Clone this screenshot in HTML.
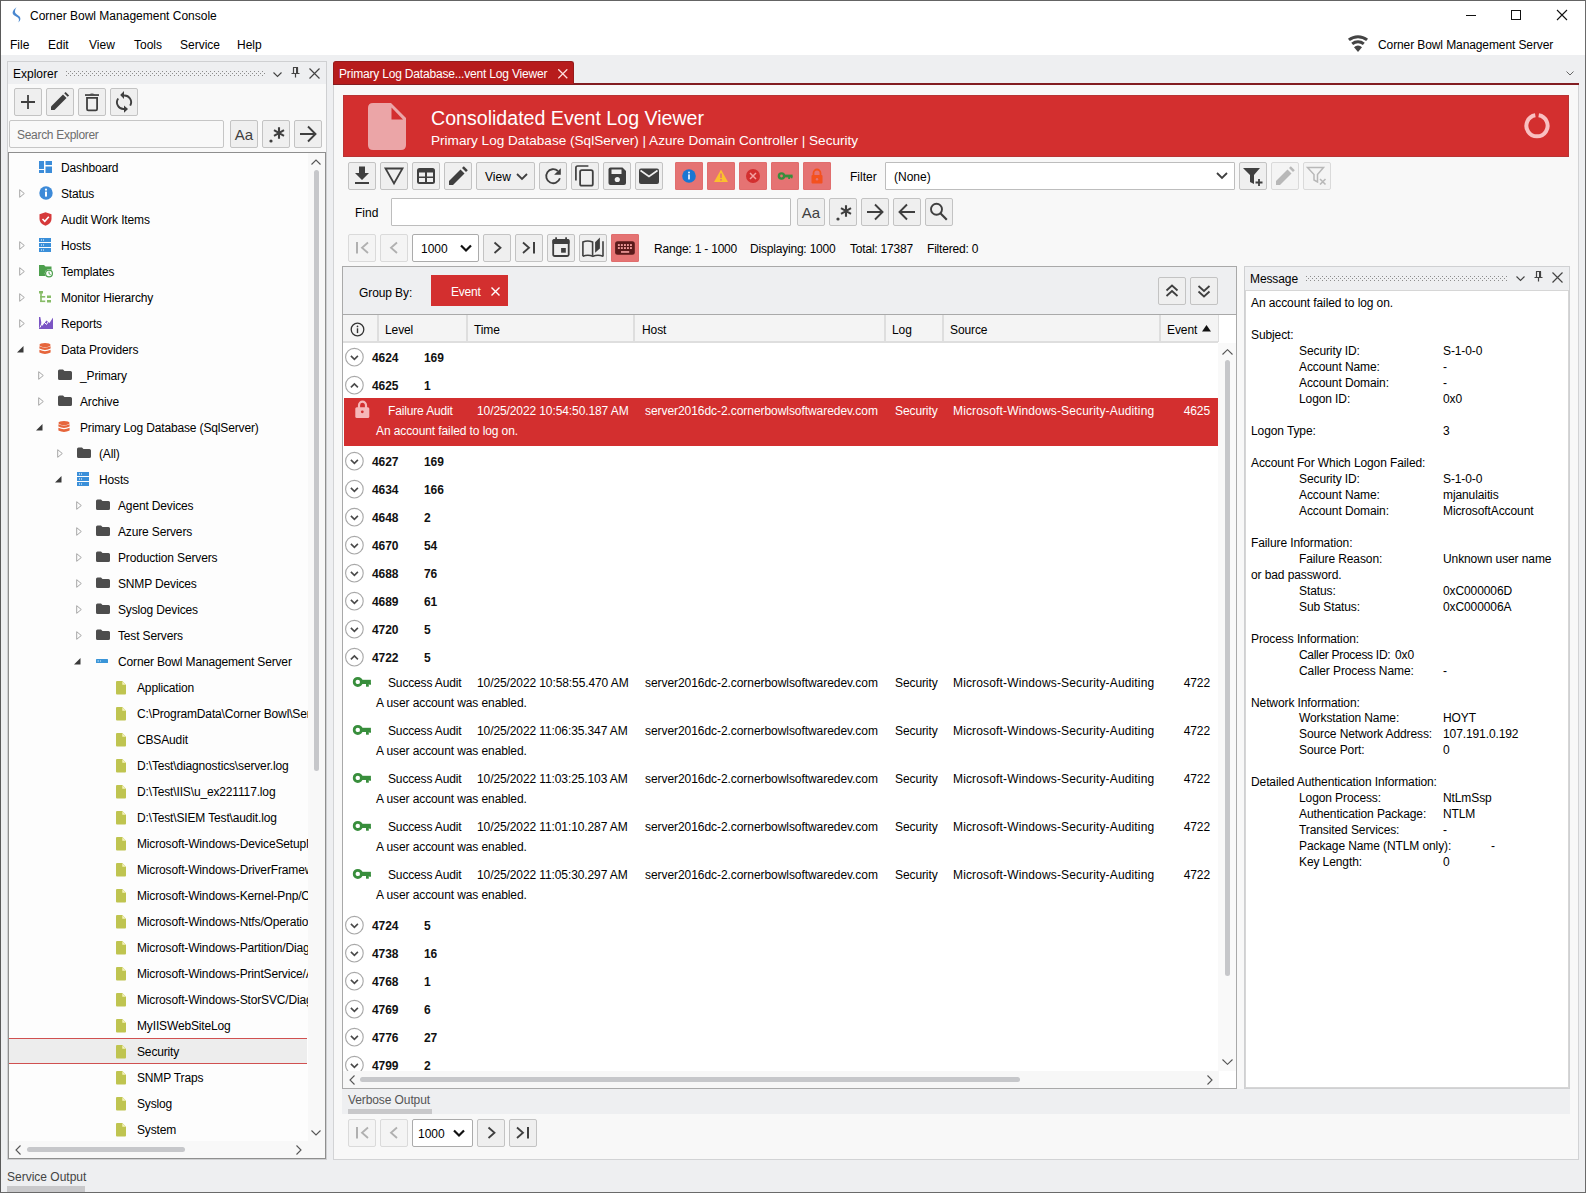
<!DOCTYPE html><html><head><meta charset="utf-8"><style>
*{margin:0;padding:0;box-sizing:border-box}
html,body{width:1586px;height:1193px;overflow:hidden;background:#eeeff1;font-family:"Liberation Sans",sans-serif;font-size:12px;color:#000000}
div,svg{position:absolute}
.t{white-space:nowrap}
</style></head><body>
<div style="left:0px;top:0px;width:1586px;height:1193px;background:#eeeff1"></div>
<div style="left:0px;top:0px;width:1586px;height:55px;background:#ffffff"></div>
<div style="left:0px;top:0px;width:1586px;height:1px;background:#646464"></div>
<div style="left:0px;top:0px;width:1px;height:1193px;background:#5a5a5a"></div>
<div style="left:1585px;top:0px;width:1px;height:1193px;background:#6a6a6a"></div>
<div style="left:0px;top:1192px;width:1586px;height:1px;background:#6a6a6a"></div>
<svg style="left:0px;top:0px;" width="30" height="30" viewBox="0 0 30 30"><path d="M16.6 7 C15 8.5 12.6 10.5 12.6 12.8 C12.6 15.2 15.8 16.2 17.8 17.4 C19.3 18.4 19.3 20.5 18.3 22.4 C20.6 20.8 21 18 19.6 16.4 C18 14.8 15.6 14 15.1 12.4 C14.7 10.9 15.4 8.6 16.6 7 Z" fill="#4a88d0"/></svg>
<div class="t" style="left:30px;top:8px;line-height:16px;font-size:12px;color:#000;">Corner Bowl Management Console</div>
<div style="left:1466px;top:15px;width:10px;height:1px;background:#111"></div>
<div style="left:1511px;top:10px;width:10px;height:10px;border:1px solid #111"></div>
<svg style="left:1556px;top:9px;" width="12" height="12" viewBox="0 0 12 12"><path d="M1 1 L11 11 M11 1 L1 11" stroke="#111" stroke-width="1.1"/></svg>
<div class="t" style="left:10px;top:37px;line-height:16px;font-size:12px;color:#000000;">File</div>
<div class="t" style="left:48px;top:37px;line-height:16px;font-size:12px;color:#000000;">Edit</div>
<div class="t" style="left:89px;top:37px;line-height:16px;font-size:12px;color:#000000;">View</div>
<div class="t" style="left:134px;top:37px;line-height:16px;font-size:12px;color:#000000;">Tools</div>
<div class="t" style="left:180px;top:37px;line-height:16px;font-size:12px;color:#000000;">Service</div>
<div class="t" style="left:237px;top:37px;line-height:16px;font-size:12px;color:#000000;">Help</div>
<svg style="left:1347px;top:33px;" width="22" height="20" viewBox="0 0 22 20"><path d="M1.9 6.9 A14.5 14.5 0 0 1 20.1 6.9" stroke="#444" stroke-width="3" fill="none"/><path d="M5.2 10.9 A9.3 9.3 0 0 1 16.8 10.9" stroke="#444" stroke-width="3" fill="none"/><path d="M11 19 L7 14.2 A5.8 5.8 0 0 1 15 14.2 Z" fill="#444"/></svg>
<div class="t" style="left:1378px;top:37px;line-height:16px;font-size:12px;color:#000000;letter-spacing:-0.1px;">Corner Bowl Management Server</div>
<div style="left:7px;top:61px;width:320px;height:1099px;background:#f9f9f9;border:1px solid #cfd0d2"></div>
<div style="left:8px;top:62px;width:318px;height:22px;background:#eeeff1"></div>
<div class="t" style="left:13px;top:66px;line-height:16px;font-size:12px;color:#000000;">Explorer</div>
<svg style="left:66px;top:71px;" width="200" height="5" viewBox="0 0 200 5"><defs><pattern id="gp66" width="4" height="4" patternUnits="userSpaceOnUse"><rect x="0" y="0" width="1" height="1" fill="#8c8c8c"/><rect x="2" y="2" width="1" height="1" fill="#8c8c8c"/></pattern></defs><rect width="200" height="5" fill="url(#gp66)"/></svg>
<svg style="left:273px;top:72px;" width="9" height="6" viewBox="0 0 9 6"><path d="M0.5 0.5 L4.5 4.5 L8.5 0.5" stroke="#444" stroke-width="1.1" fill="none"/></svg>
<svg style="left:291px;top:67px;" width="9" height="11" viewBox="0 0 9 11"><path d="M2 0.5 H7 M2.5 0.5 V6 M6.5 0.5 V6 M0.5 6.5 H8.5 M4.5 6.5 V10.5" stroke="#444" stroke-width="1.2" fill="none"/><rect x="5" y="1" width="2" height="5" fill="#444"/></svg>
<svg style="left:309px;top:68px;" width="11" height="11" viewBox="0 0 11 11"><path d="M0.5 0.5 L10.5 10.5 M10.5 0.5 L0.5 10.5" stroke="#444" stroke-width="1.2"/></svg>
<div style="left:14px;top:88px;width:28px;height:28px;background:#efefef;border:1px solid #c3c3c3;border-radius:2px"></div>
<svg style="left:14px;top:88px;" width="28" height="28" viewBox="0 0 28 28"><path d="M14 7 V21 M7 14 H21" stroke="#3f3f3f" stroke-width="1.8"/></svg>
<div style="left:46px;top:88px;width:28px;height:28px;background:#efefef;border:1px solid #c3c3c3;border-radius:2px"></div>
<svg style="left:46px;top:88px;" width="28" height="28" viewBox="0 0 28 28"><path d="M5 22 L5 18.5 L17 6.5 L20.5 10 L8.5 22 Z" fill="#3f3f3f"/><path d="M18.2 5.3 L19.6 3.9 L23.1 7.4 L21.7 8.8 Z" fill="#3f3f3f"/></svg>
<div style="left:78px;top:88px;width:28px;height:28px;background:#efefef;border:1px solid #c3c3c3;border-radius:2px"></div>
<svg style="left:78px;top:88px;" width="28" height="28" viewBox="0 0 28 28"><rect x="7" y="6.2" width="14" height="1.7" fill="#3f3f3f"/><path d="M11 6.5 Q14 4.6 17 6.5 Z" fill="#3f3f3f"/><path d="M9 9.9 H19.1 V21 Q19.1 22.3 17.8 22.3 H10.3 Q9 22.3 9 21 Z" stroke="#3f3f3f" stroke-width="1.8" fill="none"/></svg>
<div style="left:110px;top:88px;width:28px;height:28px;background:#efefef;border:1px solid #c3c3c3;border-radius:2px"></div>
<svg style="left:110px;top:88px;" width="28" height="28" viewBox="0 0 28 28"><path d="M8.2 10.5 A6.7 6.7 0 0 0 14.5 21" stroke="#3f3f3f" stroke-width="1.9" fill="none"/><path d="M14 17.4 L14 24.8 L18 21 Z" fill="#3f3f3f"/><path d="M20.2 17.6 A6.7 6.7 0 0 0 13.6 7.6" stroke="#3f3f3f" stroke-width="1.9" fill="none"/><path d="M14 3 L14 11 L10.2 7 Z" fill="#3f3f3f"/></svg>
<div style="left:9px;top:120px;width:215px;height:28px;background:#f9f9f9;border:1px solid #c6c6c6;border-radius:2px"></div>
<div class="t" style="left:17px;top:127px;line-height:16px;font-size:12px;color:#6d6d6d;letter-spacing:-0.3px;">Search Explorer</div>
<div style="left:230px;top:120px;width:28px;height:28px;background:#efefef;border:1px solid #c3c3c3;border-radius:2px"></div>
<svg style="left:230px;top:120px;" width="28" height="28" viewBox="0 0 28 28"><text x="14" y="20" text-anchor="middle" font-family="Liberation Sans" font-size="15" fill="#3f3f3f">Aa</text></svg>
<div style="left:262px;top:120px;width:28px;height:28px;background:#efefef;border:1px solid #c3c3c3;border-radius:2px"></div>
<svg style="left:262px;top:120px;" width="28" height="28" viewBox="0 0 28 28"><circle cx="9" cy="21" r="1.6" fill="#3f3f3f"/><path d="M17 7.2 V18.8 M12 10.1 L22 15.9 M22 10.1 L12 15.9" stroke="#3f3f3f" stroke-width="2.1"/></svg>
<div style="left:294px;top:120px;width:28px;height:28px;background:#efefef;border:1px solid #c3c3c3;border-radius:2px"></div>
<svg style="left:294px;top:120px;" width="28" height="28" viewBox="0 0 28 28"><path d="M6 14 H21 M14 6.5 L21.5 14 L14 21.5" stroke="#3f3f3f" stroke-width="1.9" fill="none"/></svg>
<div style="left:8px;top:152px;width:318px;height:1007px;background:#fdfdfd;border:1px solid #8f8f8f"></div>
<div style="left:308px;top:153px;width:17px;height:1005px;background:#f8f8f8"></div>
<svg style="left:311px;top:159px;" width="10" height="6" viewBox="0 0 10 6"><path d="M0.5 5.5 L5 1 L9.5 5.5" stroke="#555" stroke-width="1.1" fill="none"/></svg>
<div style="left:314px;top:170px;width:5px;height:601px;background:#c6c7ca;border-radius:3px"></div>
<svg style="left:311px;top:1130px;" width="10" height="6" viewBox="0 0 10 6"><path d="M0.5 0.5 L5 5 L9.5 0.5" stroke="#555" stroke-width="1.1" fill="none"/></svg>
<div style="left:9px;top:1141px;width:299px;height:17px;background:#f8f8f8"></div>
<svg style="left:15px;top:1145px;" width="6" height="10" viewBox="0 0 6 10"><path d="M5.5 0.5 L1 5 L5.5 9.5" stroke="#555" stroke-width="1.1" fill="none"/></svg>
<div style="left:27px;top:1147px;width:158px;height:5px;background:#c6c7ca;border-radius:3px"></div>
<svg style="left:296px;top:1145px;" width="6" height="10" viewBox="0 0 6 10"><path d="M0.5 0.5 L5 5 L0.5 9.5" stroke="#555" stroke-width="1.1" fill="none"/></svg>
<div style="left:9px;top:1038px;width:298px;height:26px;background:#ededed;border-top:1px solid #d05050;border-bottom:1px solid #d05050"></div>
<div style="left:9px;top:153px;width:299px;height:988px;overflow:hidden">
<svg style="left:30px;top:8px;" width="13" height="12" viewBox="0 0 13 12"><rect x="0" y="0" width="5" height="8" fill="#3b8cd9"/><rect x="6.5" y="0" width="6.5" height="4" fill="#3b8cd9"/><rect x="0" y="9" width="5" height="3.5" fill="#3b8cd9"/><rect x="6.5" y="5.5" width="6.5" height="7" fill="#3b8cd9"/></svg>
<div class="t" style="left:52px;top:7px;line-height:16px;font-size:12px;color:#000000;letter-spacing:-0.15px;">Dashboard</div>
<svg style="left:10px;top:36px;" width="6" height="9" viewBox="0 0 6 9"><path d="M0.7 0.7 L5.3 4.5 L0.7 8.3 Z" stroke="#a6a6a6" stroke-width="1" fill="none"/></svg>
<svg style="left:30px;top:33px;" width="14" height="14" viewBox="0 0 14 14"><circle cx="7" cy="7" r="6.7" fill="#3d8ad8"/><rect x="6" y="5.6" width="2" height="5" fill="#fff"/><circle cx="7" cy="3.7" r="1.1" fill="#fff"/></svg>
<div class="t" style="left:52px;top:33px;line-height:16px;font-size:12px;color:#000000;letter-spacing:-0.15px;">Status</div>
<svg style="left:30px;top:59px;" width="13" height="14" viewBox="0 0 13 14"><path d="M6.5 0.3 L12.5 2.2 V7 Q12.5 11.5 6.5 13.8 Q0.5 11.5 0.5 7 V2.2 Z" fill="#d6393a"/><path d="M3.5 7 L5.8 9.3 L9.8 4.8" stroke="#fff" stroke-width="1.6" fill="none"/></svg>
<div class="t" style="left:52px;top:59px;line-height:16px;font-size:12px;color:#000000;letter-spacing:-0.15px;">Audit Work Items</div>
<svg style="left:10px;top:88px;" width="6" height="9" viewBox="0 0 6 9"><path d="M0.7 0.7 L5.3 4.5 L0.7 8.3 Z" stroke="#a6a6a6" stroke-width="1" fill="none"/></svg>
<svg style="left:30px;top:85px;" width="12" height="14" viewBox="0 0 12 14"><rect x="0" y="0" width="12" height="4" fill="#3a8fd9"/><rect x="2" y="1.5" width="1" height="1" fill="#fff"/><rect x="4" y="1.5" width="1" height="1" fill="#fff"/><rect x="0" y="5" width="12" height="4" fill="#3a8fd9"/><rect x="2" y="6.5" width="1" height="1" fill="#fff"/><rect x="4" y="6.5" width="1" height="1" fill="#fff"/><rect x="0" y="10" width="12" height="4" fill="#3a8fd9"/><rect x="2" y="11.5" width="1" height="1" fill="#fff"/><rect x="4" y="11.5" width="1" height="1" fill="#fff"/></svg>
<div class="t" style="left:52px;top:85px;line-height:16px;font-size:12px;color:#000000;letter-spacing:-0.15px;">Hosts</div>
<svg style="left:10px;top:114px;" width="6" height="9" viewBox="0 0 6 9"><path d="M0.7 0.7 L5.3 4.5 L0.7 8.3 Z" stroke="#a6a6a6" stroke-width="1" fill="none"/></svg>
<svg style="left:30px;top:112px;" width="15" height="13" viewBox="0 0 15 13"><path d="M0 0 H5 L6.5 1.5 H12.5 V11 H0 Z" fill="#4d9f4d"/><circle cx="10" cy="8.5" r="4.2" fill="#fff"/><circle cx="10" cy="8.5" r="3.4" fill="none" stroke="#4d9f4d" stroke-width="1.2"/><path d="M10 6.6 V8.7 L11.6 9.6" stroke="#4d9f4d" stroke-width="1" fill="none"/></svg>
<div class="t" style="left:52px;top:111px;line-height:16px;font-size:12px;color:#000000;letter-spacing:-0.15px;">Templates</div>
<svg style="left:10px;top:140px;" width="6" height="9" viewBox="0 0 6 9"><path d="M0.7 0.7 L5.3 4.5 L0.7 8.3 Z" stroke="#a6a6a6" stroke-width="1" fill="none"/></svg>
<svg style="left:30px;top:138px;" width="12" height="12" viewBox="0 0 12 12"><rect x="0" y="0" width="4" height="2.5" fill="#86bb67"/><rect x="1.2" y="2" width="1.6" height="9" fill="#86bb67"/><rect x="1.2" y="5" width="5" height="1.6" fill="#86bb67"/><rect x="1.2" y="9.5" width="5" height="1.6" fill="#86bb67"/><rect x="8" y="4.5" width="4" height="2.5" fill="#86bb67"/><rect x="8" y="9" width="4" height="2.5" fill="#86bb67"/></svg>
<div class="t" style="left:52px;top:137px;line-height:16px;font-size:12px;color:#000000;letter-spacing:-0.15px;">Monitor Hierarchy</div>
<svg style="left:10px;top:166px;" width="6" height="9" viewBox="0 0 6 9"><path d="M0.7 0.7 L5.3 4.5 L0.7 8.3 Z" stroke="#a6a6a6" stroke-width="1" fill="none"/></svg>
<svg style="left:30px;top:164px;" width="14" height="12" viewBox="0 0 14 12"><path d="M0 0 V12 H14 V0.5 L10.5 6 L7.5 3.5 L3 9 L1.3 0 Z" fill="#7b55c4"/><path d="M1 10.5 L4 4 L7.5 7.5 L10.5 2.5 L13.5 0.5" stroke="#fff" stroke-width="1" fill="none"/></svg>
<div class="t" style="left:52px;top:163px;line-height:16px;font-size:12px;color:#000000;letter-spacing:-0.15px;">Reports</div>
<svg style="left:8px;top:193px;" width="7" height="7" viewBox="0 0 7 7"><path d="M6.5 0 L6.5 6.5 L0 6.5 Z" fill="#3a3a3a"/></svg>
<svg style="left:30px;top:190px;" width="12" height="12" viewBox="0 0 12 12"><ellipse cx="6" cy="2" rx="5.6" ry="2" fill="#e6653b"/><path d="M0.4 3.2 Q6 6 11.6 3.2 V5.6 Q6 8.4 0.4 5.6 Z" fill="#e6653b"/><path d="M0.4 6.8 Q6 9.6 11.6 6.8 V9.6 Q6 12.4 0.4 9.6 Z" fill="#e6653b"/></svg>
<div class="t" style="left:52px;top:189px;line-height:16px;font-size:12px;color:#000000;letter-spacing:-0.15px;">Data Providers</div>
<svg style="left:29px;top:218px;" width="6" height="9" viewBox="0 0 6 9"><path d="M0.7 0.7 L5.3 4.5 L0.7 8.3 Z" stroke="#a6a6a6" stroke-width="1" fill="none"/></svg>
<svg style="left:49px;top:216px;" width="14" height="12" viewBox="0 0 14 12"><path d="M0 2 Q0 0.5 1.5 0.5 H5 L6.5 2 H12.5 Q14 2 14 3.5 V9.5 Q14 11 12.5 11 H1.5 Q0 11 0 9.5 Z" fill="#4d4d4d"/></svg>
<div class="t" style="left:71px;top:215px;line-height:16px;font-size:12px;color:#000000;letter-spacing:-0.15px;">_Primary</div>
<svg style="left:29px;top:244px;" width="6" height="9" viewBox="0 0 6 9"><path d="M0.7 0.7 L5.3 4.5 L0.7 8.3 Z" stroke="#a6a6a6" stroke-width="1" fill="none"/></svg>
<svg style="left:49px;top:242px;" width="14" height="12" viewBox="0 0 14 12"><path d="M0 2 Q0 0.5 1.5 0.5 H5 L6.5 2 H12.5 Q14 2 14 3.5 V9.5 Q14 11 12.5 11 H1.5 Q0 11 0 9.5 Z" fill="#4d4d4d"/></svg>
<div class="t" style="left:71px;top:241px;line-height:16px;font-size:12px;color:#000000;letter-spacing:-0.15px;">Archive</div>
<svg style="left:27px;top:271px;" width="7" height="7" viewBox="0 0 7 7"><path d="M6.5 0 L6.5 6.5 L0 6.5 Z" fill="#3a3a3a"/></svg>
<svg style="left:49px;top:268px;" width="12" height="12" viewBox="0 0 12 12"><ellipse cx="6" cy="2" rx="5.6" ry="2" fill="#e6653b"/><path d="M0.4 3.2 Q6 6 11.6 3.2 V5.6 Q6 8.4 0.4 5.6 Z" fill="#e6653b"/><path d="M0.4 6.8 Q6 9.6 11.6 6.8 V9.6 Q6 12.4 0.4 9.6 Z" fill="#e6653b"/></svg>
<div class="t" style="left:71px;top:267px;line-height:16px;font-size:12px;color:#000000;letter-spacing:-0.15px;">Primary Log Database (SqlServer)</div>
<svg style="left:48px;top:296px;" width="6" height="9" viewBox="0 0 6 9"><path d="M0.7 0.7 L5.3 4.5 L0.7 8.3 Z" stroke="#a6a6a6" stroke-width="1" fill="none"/></svg>
<svg style="left:68px;top:294px;" width="14" height="12" viewBox="0 0 14 12"><path d="M0 2 Q0 0.5 1.5 0.5 H5 L6.5 2 H12.5 Q14 2 14 3.5 V9.5 Q14 11 12.5 11 H1.5 Q0 11 0 9.5 Z" fill="#4d4d4d"/></svg>
<div class="t" style="left:90px;top:293px;line-height:16px;font-size:12px;color:#000000;letter-spacing:-0.15px;">(All)</div>
<svg style="left:46px;top:323px;" width="7" height="7" viewBox="0 0 7 7"><path d="M6.5 0 L6.5 6.5 L0 6.5 Z" fill="#3a3a3a"/></svg>
<svg style="left:68px;top:319px;" width="12" height="14" viewBox="0 0 12 14"><rect x="0" y="0" width="12" height="4" fill="#3a8fd9"/><rect x="2" y="1.5" width="1" height="1" fill="#fff"/><rect x="4" y="1.5" width="1" height="1" fill="#fff"/><rect x="0" y="5" width="12" height="4" fill="#3a8fd9"/><rect x="2" y="6.5" width="1" height="1" fill="#fff"/><rect x="4" y="6.5" width="1" height="1" fill="#fff"/><rect x="0" y="10" width="12" height="4" fill="#3a8fd9"/><rect x="2" y="11.5" width="1" height="1" fill="#fff"/><rect x="4" y="11.5" width="1" height="1" fill="#fff"/></svg>
<div class="t" style="left:90px;top:319px;line-height:16px;font-size:12px;color:#000000;letter-spacing:-0.15px;">Hosts</div>
<svg style="left:67px;top:348px;" width="6" height="9" viewBox="0 0 6 9"><path d="M0.7 0.7 L5.3 4.5 L0.7 8.3 Z" stroke="#a6a6a6" stroke-width="1" fill="none"/></svg>
<svg style="left:87px;top:346px;" width="14" height="12" viewBox="0 0 14 12"><path d="M0 2 Q0 0.5 1.5 0.5 H5 L6.5 2 H12.5 Q14 2 14 3.5 V9.5 Q14 11 12.5 11 H1.5 Q0 11 0 9.5 Z" fill="#4d4d4d"/></svg>
<div class="t" style="left:109px;top:345px;line-height:16px;font-size:12px;color:#000000;letter-spacing:-0.15px;">Agent Devices</div>
<svg style="left:67px;top:374px;" width="6" height="9" viewBox="0 0 6 9"><path d="M0.7 0.7 L5.3 4.5 L0.7 8.3 Z" stroke="#a6a6a6" stroke-width="1" fill="none"/></svg>
<svg style="left:87px;top:372px;" width="14" height="12" viewBox="0 0 14 12"><path d="M0 2 Q0 0.5 1.5 0.5 H5 L6.5 2 H12.5 Q14 2 14 3.5 V9.5 Q14 11 12.5 11 H1.5 Q0 11 0 9.5 Z" fill="#4d4d4d"/></svg>
<div class="t" style="left:109px;top:371px;line-height:16px;font-size:12px;color:#000000;letter-spacing:-0.15px;">Azure Servers</div>
<svg style="left:67px;top:400px;" width="6" height="9" viewBox="0 0 6 9"><path d="M0.7 0.7 L5.3 4.5 L0.7 8.3 Z" stroke="#a6a6a6" stroke-width="1" fill="none"/></svg>
<svg style="left:87px;top:398px;" width="14" height="12" viewBox="0 0 14 12"><path d="M0 2 Q0 0.5 1.5 0.5 H5 L6.5 2 H12.5 Q14 2 14 3.5 V9.5 Q14 11 12.5 11 H1.5 Q0 11 0 9.5 Z" fill="#4d4d4d"/></svg>
<div class="t" style="left:109px;top:397px;line-height:16px;font-size:12px;color:#000000;letter-spacing:-0.15px;">Production Servers</div>
<svg style="left:67px;top:426px;" width="6" height="9" viewBox="0 0 6 9"><path d="M0.7 0.7 L5.3 4.5 L0.7 8.3 Z" stroke="#a6a6a6" stroke-width="1" fill="none"/></svg>
<svg style="left:87px;top:424px;" width="14" height="12" viewBox="0 0 14 12"><path d="M0 2 Q0 0.5 1.5 0.5 H5 L6.5 2 H12.5 Q14 2 14 3.5 V9.5 Q14 11 12.5 11 H1.5 Q0 11 0 9.5 Z" fill="#4d4d4d"/></svg>
<div class="t" style="left:109px;top:423px;line-height:16px;font-size:12px;color:#000000;letter-spacing:-0.15px;">SNMP Devices</div>
<svg style="left:67px;top:452px;" width="6" height="9" viewBox="0 0 6 9"><path d="M0.7 0.7 L5.3 4.5 L0.7 8.3 Z" stroke="#a6a6a6" stroke-width="1" fill="none"/></svg>
<svg style="left:87px;top:450px;" width="14" height="12" viewBox="0 0 14 12"><path d="M0 2 Q0 0.5 1.5 0.5 H5 L6.5 2 H12.5 Q14 2 14 3.5 V9.5 Q14 11 12.5 11 H1.5 Q0 11 0 9.5 Z" fill="#4d4d4d"/></svg>
<div class="t" style="left:109px;top:449px;line-height:16px;font-size:12px;color:#000000;letter-spacing:-0.15px;">Syslog Devices</div>
<svg style="left:67px;top:478px;" width="6" height="9" viewBox="0 0 6 9"><path d="M0.7 0.7 L5.3 4.5 L0.7 8.3 Z" stroke="#a6a6a6" stroke-width="1" fill="none"/></svg>
<svg style="left:87px;top:476px;" width="14" height="12" viewBox="0 0 14 12"><path d="M0 2 Q0 0.5 1.5 0.5 H5 L6.5 2 H12.5 Q14 2 14 3.5 V9.5 Q14 11 12.5 11 H1.5 Q0 11 0 9.5 Z" fill="#4d4d4d"/></svg>
<div class="t" style="left:109px;top:475px;line-height:16px;font-size:12px;color:#000000;letter-spacing:-0.15px;">Test Servers</div>
<svg style="left:65px;top:505px;" width="7" height="7" viewBox="0 0 7 7"><path d="M6.5 0 L6.5 6.5 L0 6.5 Z" fill="#3a3a3a"/></svg>
<svg style="left:87px;top:506px;" width="12" height="5" viewBox="0 0 12 5"><rect x="0" y="0" width="12" height="4" rx="0.5" fill="#3a95d8"/><rect x="1.5" y="1.3" width="1.4" height="1.4" fill="#a8d4f4"/><rect x="4" y="1.3" width="1" height="1.4" fill="#a8d4f4"/></svg>
<div class="t" style="left:109px;top:501px;line-height:16px;font-size:12px;color:#000000;letter-spacing:-0.15px;">Corner Bowl Management Server</div>
<svg style="left:107px;top:528px;" width="10" height="14" viewBox="0 0 10 14"><path d="M0 1 Q0 0 1 0 H6.3 L10 3.7 V12.5 Q10 13.5 9 13.5 H1 Q0 13.5 0 12.5 Z" fill="#bfc450"/><path d="M6.3 0.3 V3.7 H9.7 Z" fill="#fffbd0" opacity="0.85"/></svg>
<div class="t" style="left:128px;top:527px;line-height:16px;font-size:12px;color:#000000;letter-spacing:-0.15px;">Application</div>
<svg style="left:107px;top:554px;" width="10" height="14" viewBox="0 0 10 14"><path d="M0 1 Q0 0 1 0 H6.3 L10 3.7 V12.5 Q10 13.5 9 13.5 H1 Q0 13.5 0 12.5 Z" fill="#bfc450"/><path d="M6.3 0.3 V3.7 H9.7 Z" fill="#fffbd0" opacity="0.85"/></svg>
<div class="t" style="left:128px;top:553px;line-height:16px;font-size:12px;color:#000000;letter-spacing:-0.15px;">C:\ProgramData\Corner Bowl\Server\Logs</div>
<svg style="left:107px;top:580px;" width="10" height="14" viewBox="0 0 10 14"><path d="M0 1 Q0 0 1 0 H6.3 L10 3.7 V12.5 Q10 13.5 9 13.5 H1 Q0 13.5 0 12.5 Z" fill="#bfc450"/><path d="M6.3 0.3 V3.7 H9.7 Z" fill="#fffbd0" opacity="0.85"/></svg>
<div class="t" style="left:128px;top:579px;line-height:16px;font-size:12px;color:#000000;letter-spacing:-0.15px;">CBSAudit</div>
<svg style="left:107px;top:606px;" width="10" height="14" viewBox="0 0 10 14"><path d="M0 1 Q0 0 1 0 H6.3 L10 3.7 V12.5 Q10 13.5 9 13.5 H1 Q0 13.5 0 12.5 Z" fill="#bfc450"/><path d="M6.3 0.3 V3.7 H9.7 Z" fill="#fffbd0" opacity="0.85"/></svg>
<div class="t" style="left:128px;top:605px;line-height:16px;font-size:12px;color:#000000;letter-spacing:-0.15px;">D:\Test\diagnostics\server.log</div>
<svg style="left:107px;top:632px;" width="10" height="14" viewBox="0 0 10 14"><path d="M0 1 Q0 0 1 0 H6.3 L10 3.7 V12.5 Q10 13.5 9 13.5 H1 Q0 13.5 0 12.5 Z" fill="#bfc450"/><path d="M6.3 0.3 V3.7 H9.7 Z" fill="#fffbd0" opacity="0.85"/></svg>
<div class="t" style="left:128px;top:631px;line-height:16px;font-size:12px;color:#000000;letter-spacing:-0.15px;">D:\Test\IIS\u_ex221117.log</div>
<svg style="left:107px;top:658px;" width="10" height="14" viewBox="0 0 10 14"><path d="M0 1 Q0 0 1 0 H6.3 L10 3.7 V12.5 Q10 13.5 9 13.5 H1 Q0 13.5 0 12.5 Z" fill="#bfc450"/><path d="M6.3 0.3 V3.7 H9.7 Z" fill="#fffbd0" opacity="0.85"/></svg>
<div class="t" style="left:128px;top:657px;line-height:16px;font-size:12px;color:#000000;letter-spacing:-0.15px;">D:\Test\SIEM Test\audit.log</div>
<svg style="left:107px;top:684px;" width="10" height="14" viewBox="0 0 10 14"><path d="M0 1 Q0 0 1 0 H6.3 L10 3.7 V12.5 Q10 13.5 9 13.5 H1 Q0 13.5 0 12.5 Z" fill="#bfc450"/><path d="M6.3 0.3 V3.7 H9.7 Z" fill="#fffbd0" opacity="0.85"/></svg>
<div class="t" style="left:128px;top:683px;line-height:16px;font-size:12px;color:#000000;letter-spacing:-0.15px;">Microsoft-Windows-DeviceSetupManager/Admin</div>
<svg style="left:107px;top:710px;" width="10" height="14" viewBox="0 0 10 14"><path d="M0 1 Q0 0 1 0 H6.3 L10 3.7 V12.5 Q10 13.5 9 13.5 H1 Q0 13.5 0 12.5 Z" fill="#bfc450"/><path d="M6.3 0.3 V3.7 H9.7 Z" fill="#fffbd0" opacity="0.85"/></svg>
<div class="t" style="left:128px;top:709px;line-height:16px;font-size:12px;color:#000000;letter-spacing:-0.15px;">Microsoft-Windows-DriverFrameworks-UserMode/Operational</div>
<svg style="left:107px;top:736px;" width="10" height="14" viewBox="0 0 10 14"><path d="M0 1 Q0 0 1 0 H6.3 L10 3.7 V12.5 Q10 13.5 9 13.5 H1 Q0 13.5 0 12.5 Z" fill="#bfc450"/><path d="M6.3 0.3 V3.7 H9.7 Z" fill="#fffbd0" opacity="0.85"/></svg>
<div class="t" style="left:128px;top:735px;line-height:16px;font-size:12px;color:#000000;letter-spacing:-0.15px;">Microsoft-Windows-Kernel-Pnp/Configuration</div>
<svg style="left:107px;top:762px;" width="10" height="14" viewBox="0 0 10 14"><path d="M0 1 Q0 0 1 0 H6.3 L10 3.7 V12.5 Q10 13.5 9 13.5 H1 Q0 13.5 0 12.5 Z" fill="#bfc450"/><path d="M6.3 0.3 V3.7 H9.7 Z" fill="#fffbd0" opacity="0.85"/></svg>
<div class="t" style="left:128px;top:761px;line-height:16px;font-size:12px;color:#000000;letter-spacing:-0.15px;">Microsoft-Windows-Ntfs/Operational</div>
<svg style="left:107px;top:788px;" width="10" height="14" viewBox="0 0 10 14"><path d="M0 1 Q0 0 1 0 H6.3 L10 3.7 V12.5 Q10 13.5 9 13.5 H1 Q0 13.5 0 12.5 Z" fill="#bfc450"/><path d="M6.3 0.3 V3.7 H9.7 Z" fill="#fffbd0" opacity="0.85"/></svg>
<div class="t" style="left:128px;top:787px;line-height:16px;font-size:12px;color:#000000;letter-spacing:-0.15px;">Microsoft-Windows-Partition/Diagnostic</div>
<svg style="left:107px;top:814px;" width="10" height="14" viewBox="0 0 10 14"><path d="M0 1 Q0 0 1 0 H6.3 L10 3.7 V12.5 Q10 13.5 9 13.5 H1 Q0 13.5 0 12.5 Z" fill="#bfc450"/><path d="M6.3 0.3 V3.7 H9.7 Z" fill="#fffbd0" opacity="0.85"/></svg>
<div class="t" style="left:128px;top:813px;line-height:16px;font-size:12px;color:#000000;letter-spacing:-0.15px;">Microsoft-Windows-PrintService/Admin</div>
<svg style="left:107px;top:840px;" width="10" height="14" viewBox="0 0 10 14"><path d="M0 1 Q0 0 1 0 H6.3 L10 3.7 V12.5 Q10 13.5 9 13.5 H1 Q0 13.5 0 12.5 Z" fill="#bfc450"/><path d="M6.3 0.3 V3.7 H9.7 Z" fill="#fffbd0" opacity="0.85"/></svg>
<div class="t" style="left:128px;top:839px;line-height:16px;font-size:12px;color:#000000;letter-spacing:-0.15px;">Microsoft-Windows-StorSVC/Diagnostic</div>
<svg style="left:107px;top:866px;" width="10" height="14" viewBox="0 0 10 14"><path d="M0 1 Q0 0 1 0 H6.3 L10 3.7 V12.5 Q10 13.5 9 13.5 H1 Q0 13.5 0 12.5 Z" fill="#bfc450"/><path d="M6.3 0.3 V3.7 H9.7 Z" fill="#fffbd0" opacity="0.85"/></svg>
<div class="t" style="left:128px;top:865px;line-height:16px;font-size:12px;color:#000000;letter-spacing:-0.15px;">MyIISWebSiteLog</div>
<svg style="left:107px;top:892px;" width="10" height="14" viewBox="0 0 10 14"><path d="M0 1 Q0 0 1 0 H6.3 L10 3.7 V12.5 Q10 13.5 9 13.5 H1 Q0 13.5 0 12.5 Z" fill="#bfc450"/><path d="M6.3 0.3 V3.7 H9.7 Z" fill="#fffbd0" opacity="0.85"/></svg>
<div class="t" style="left:128px;top:891px;line-height:16px;font-size:12px;color:#000000;letter-spacing:-0.15px;">Security</div>
<svg style="left:107px;top:918px;" width="10" height="14" viewBox="0 0 10 14"><path d="M0 1 Q0 0 1 0 H6.3 L10 3.7 V12.5 Q10 13.5 9 13.5 H1 Q0 13.5 0 12.5 Z" fill="#bfc450"/><path d="M6.3 0.3 V3.7 H9.7 Z" fill="#fffbd0" opacity="0.85"/></svg>
<div class="t" style="left:128px;top:917px;line-height:16px;font-size:12px;color:#000000;letter-spacing:-0.15px;">SNMP Traps</div>
<svg style="left:107px;top:944px;" width="10" height="14" viewBox="0 0 10 14"><path d="M0 1 Q0 0 1 0 H6.3 L10 3.7 V12.5 Q10 13.5 9 13.5 H1 Q0 13.5 0 12.5 Z" fill="#bfc450"/><path d="M6.3 0.3 V3.7 H9.7 Z" fill="#fffbd0" opacity="0.85"/></svg>
<div class="t" style="left:128px;top:943px;line-height:16px;font-size:12px;color:#000000;letter-spacing:-0.15px;">Syslog</div>
<svg style="left:107px;top:970px;" width="10" height="14" viewBox="0 0 10 14"><path d="M0 1 Q0 0 1 0 H6.3 L10 3.7 V12.5 Q10 13.5 9 13.5 H1 Q0 13.5 0 12.5 Z" fill="#bfc450"/><path d="M6.3 0.3 V3.7 H9.7 Z" fill="#fffbd0" opacity="0.85"/></svg>
<div class="t" style="left:128px;top:969px;line-height:16px;font-size:12px;color:#000000;letter-spacing:-0.15px;">System</div>
</div>
<div class="t" style="left:7px;top:1169px;line-height:16px;font-size:12px;color:#444;">Service Output</div>
<div style="left:7px;top:1186px;width:78px;height:6px;background:#c8c8ca"></div>
<div style="left:333px;top:84px;width:1246px;height:1076px;background:#f8f8f8;border:1px solid #d2d3d5;border-top:none"></div>
<div style="left:333px;top:83px;width:1246px;height:2px;background:#821d21"></div>
<div style="left:333px;top:61px;width:241px;height:23px;background:#b71c1c;border:1px solid #961b1b;border-bottom:none;border-radius:3px 3px 0 0"></div>
<div class="t" style="left:339px;top:66px;line-height:16px;font-size:12px;color:#ffffff;letter-spacing:-0.18px;">Primary Log Database...vent Log Viewer</div>
<svg style="left:558px;top:69px;" width="10" height="10" viewBox="0 0 10 10"><path d="M0.3 0.3 L9.3 9.3 M9.3 0.3 L0.3 9.3" stroke="#ffe0e0" stroke-width="1.3"/></svg>
<svg style="left:1566px;top:71px;" width="8" height="5" viewBox="0 0 8 5"><path d="M0.5 0.5 L4 4 L7.5 0.5" stroke="#666" stroke-width="1" fill="none"/></svg>
<div style="left:343px;top:95px;width:1226px;height:62px;background:#d32f2f;border:1px solid #b83434"></div>
<svg style="left:368px;top:103px;" width="38" height="47" viewBox="0 0 38 47"><path d="M5 0 H23 L38 15 V42 Q38 47 33 47 H5 Q0 47 0 42 V5 Q0 0 5 0 Z" fill="#eba5a7"/><path d="M23.5 4.5 V16.5 H35 Z" fill="#d32f2f"/></svg>
<div class="t" style="left:431px;top:106px;line-height:24px;font-size:19.6px;color:#ffffff;">Consolidated Event Log Viewer</div>
<div class="t" style="left:431px;top:132px;line-height:18px;font-size:13.6px;color:#ffffff;">Primary Log Database (SqlServer) | Azure Domain Controller | Security</div>
<svg style="left:1524px;top:113px;" width="26" height="26" viewBox="0 0 26 26"><path d="M11.3 2.3 A10.6 10.6 0 1 0 14.7 2.3" stroke="#f9c0c1" stroke-width="4" fill="none"/></svg>
<div style="left:348px;top:162px;width:28px;height:28px;background:#efefef;border:1px solid #c3c3c3;border-radius:2px"></div>
<svg style="left:348px;top:162px;" width="28" height="28" viewBox="0 0 28 28"><path d="M11 4.5 H17 V11 H21 L14 18 L7 11 H11 Z" fill="#3f3f3f"/><rect x="7" y="20" width="14" height="2" fill="#3f3f3f"/></svg>
<div style="left:380px;top:162px;width:28px;height:28px;background:#efefef;border:1px solid #c3c3c3;border-radius:2px"></div>
<svg style="left:380px;top:162px;" width="28" height="28" viewBox="0 0 28 28"><path d="M5.5 6.5 H22.5 L14 21.5 Z" stroke="#3f3f3f" stroke-width="1.8" fill="none" stroke-linejoin="miter"/></svg>
<div style="left:412px;top:162px;width:28px;height:28px;background:#efefef;border:1px solid #c3c3c3;border-radius:2px"></div>
<svg style="left:412px;top:162px;" width="28" height="28" viewBox="0 0 28 28"><rect x="5" y="6" width="18" height="16" rx="2.5" fill="#3f3f3f"/><rect x="7" y="10.5" width="6" height="4" fill="#efefef"/><rect x="15" y="10.5" width="6" height="4" fill="#efefef"/><rect x="7" y="16" width="6" height="4" fill="#efefef"/><rect x="15" y="16" width="6" height="4" fill="#efefef"/></svg>
<div style="left:444px;top:162px;width:28px;height:28px;background:#efefef;border:1px solid #c3c3c3;border-radius:2px"></div>
<svg style="left:444px;top:162px;" width="28" height="28" viewBox="0 0 28 28"><path d="M5 23 L5 19 L16.5 7.5 L20.5 11.5 L9 23 Z" fill="#3f3f3f"/><path d="M18 6 L19.8 4.2 L23.8 8.2 L22 10 Z" fill="#3f3f3f"/></svg>
<div style="left:476px;top:162px;width:59px;height:28px;background:#efefef;border:1px solid #c3c3c3;border-radius:2px"></div>
<div class="t" style="left:485px;top:169px;line-height:16px;font-size:12px;color:#000000;">View</div>
<svg style="left:516px;top:173px;" width="12" height="8" viewBox="0 0 12 8"><path d="M1 1 L6 6 L11 1" stroke="#3f3f3f" stroke-width="1.8" fill="none"/></svg>
<div style="left:539px;top:162px;width:28px;height:28px;background:#efefef;border:1px solid #c3c3c3;border-radius:2px"></div>
<svg style="left:539px;top:162px;" width="28" height="28" viewBox="0 0 28 28"><path d="M20.9 16.3 A7 7 0 1 1 18.9 9" stroke="#3f3f3f" stroke-width="1.8" fill="none"/><path d="M15.1 12.7 L21.8 12.7 L21.8 6.3 Z" fill="#3f3f3f"/></svg>
<div style="left:571px;top:162px;width:28px;height:28px;background:#efefef;border:1px solid #c3c3c3;border-radius:2px"></div>
<svg style="left:571px;top:162px;" width="28" height="28" viewBox="0 0 28 28"><path d="M4.9 18.6 V5.8 Q4.9 4 6.7 4 H17.4" stroke="#3f3f3f" stroke-width="1.7" fill="none"/><rect x="9.1" y="8.2" width="12.7" height="15.5" rx="1.8" stroke="#3f3f3f" stroke-width="1.8" fill="none"/></svg>
<div style="left:603px;top:162px;width:28px;height:28px;background:#efefef;border:1px solid #c3c3c3;border-radius:2px"></div>
<svg style="left:603px;top:162px;" width="28" height="28" viewBox="0 0 28 28"><path d="M5.5 7.5 Q5.5 5.5 7.5 5.5 H19.5 L23 9 V21 Q23 23 21 23 H7.5 Q5.5 23 5.5 21 Z" fill="#3f3f3f"/><rect x="8.5" y="7.5" width="10" height="4.5" fill="#efefef"/><circle cx="14.3" cy="17.5" r="2.6" fill="#efefef"/></svg>
<div style="left:635px;top:162px;width:28px;height:28px;background:#efefef;border:1px solid #c3c3c3;border-radius:2px"></div>
<svg style="left:635px;top:162px;" width="28" height="28" viewBox="0 0 28 28"><rect x="4" y="6.5" width="20" height="15.5" rx="2" fill="#3f3f3f"/><path d="M5.5 8.5 L14 14.5 L22.5 8.5" stroke="#efefef" stroke-width="1.6" fill="none"/></svg>
<div style="left:675px;top:162px;width:28px;height:28px;background:#e57373;border:1px solid #e06e6e;border-radius:1px"></div>
<svg style="left:675px;top:162px;" width="28" height="28" viewBox="0 0 28 28"><circle cx="14" cy="14" r="6.8" fill="#1976d2"/><rect x="13.1" y="12.4" width="1.8" height="5" fill="#e3f0ff"/><circle cx="14" cy="10.6" r="1" fill="#e3f0ff"/></svg>
<div style="left:707px;top:162px;width:28px;height:28px;background:#e57373;border:1px solid #e06e6e;border-radius:1px"></div>
<svg style="left:707px;top:162px;" width="28" height="28" viewBox="0 0 28 28"><path d="M14 7.5 L21 20 H7 Z" fill="#fbc02d"/><rect x="13.2" y="11.5" width="1.6" height="4.5" fill="#e57373"/><rect x="13.2" y="17" width="1.6" height="1.6" fill="#e57373"/></svg>
<div style="left:739px;top:162px;width:28px;height:28px;background:#e57373;border:1px solid #e06e6e;border-radius:1px"></div>
<svg style="left:739px;top:162px;" width="28" height="28" viewBox="0 0 28 28"><circle cx="14" cy="14" r="7" fill="#d32f2f"/><path d="M11 11 L17 17 M17 11 L11 17" stroke="#f4a0a0" stroke-width="1.5"/></svg>
<div style="left:771px;top:162px;width:28px;height:28px;background:#e57373;border:1px solid #e06e6e;border-radius:1px"></div>
<svg style="left:771px;top:162px;" width="28" height="28" viewBox="0 0 28 28"><circle cx="10.5" cy="14" r="3.8" fill="#388e3c"/><circle cx="10.5" cy="14" r="1.4" fill="#e57373"/><rect x="13" y="12.6" width="8.6" height="2.8" fill="#388e3c"/><rect x="17.2" y="14" width="1.8" height="3" fill="#388e3c"/><rect x="19.6" y="14" width="1.8" height="2.3" fill="#388e3c"/></svg>
<div style="left:803px;top:162px;width:28px;height:28px;background:#e57373;border:1px solid #e06e6e;border-radius:1px"></div>
<svg style="left:803px;top:162px;" width="28" height="28" viewBox="0 0 28 28"><path d="M10.5 13 V11 A3.5 3.5 0 0 1 17.5 11 V13" stroke="#f4511e" stroke-width="1.8" fill="none"/><rect x="8.5" y="13" width="11" height="8.5" rx="1" fill="#f4511e"/><circle cx="14" cy="17.2" r="1.2" fill="#e57373"/></svg>
<div class="t" style="left:850px;top:169px;line-height:16px;font-size:12px;color:#000000;">Filter</div>
<div style="left:885px;top:162px;width:350px;height:28px;background:#ffffff;border:1px solid #bdbdbd;border-radius:1px"></div>
<div class="t" style="left:894px;top:169px;line-height:16px;font-size:12px;color:#000000;">(None)</div>
<svg style="left:1216px;top:172px;" width="12" height="8" viewBox="0 0 12 8"><path d="M1 1 L6 6 L11 1" stroke="#3f3f3f" stroke-width="1.8" fill="none"/></svg>
<div style="left:1239px;top:162px;width:28px;height:28px;background:#efefef;border:1px solid #c3c3c3;border-radius:2px"></div>
<svg style="left:1239px;top:162px;" width="28" height="28" viewBox="0 0 28 28"><path d="M4 6 H21 L15 13 V22 L11 20 V13 Z" fill="#3f3f3f"/><path d="M20 17 V24 M16.5 20.5 H23.5" stroke="#3f3f3f" stroke-width="1.8"/></svg>
<div style="left:1271px;top:162px;width:28px;height:28px;background:#f4f4f4;border:1px solid #dadada;border-radius:2px"></div>
<svg style="left:1271px;top:162px;" width="28" height="28" viewBox="0 0 28 28"><path d="M5 23 L5 19 L16.5 7.5 L20.5 11.5 L9 23 Z" fill="#b8b8b8"/><path d="M18 6 L19.8 4.2 L23.8 8.2 L22 10 Z" fill="#b8b8b8"/></svg>
<div style="left:1303px;top:162px;width:28px;height:28px;background:#f4f4f4;border:1px solid #dadada;border-radius:2px"></div>
<svg style="left:1303px;top:162px;" width="28" height="28" viewBox="0 0 28 28"><path d="M4.5 5.5 H20.5 L14.5 12.5 V20 L11 18 V12.5 Z" stroke="#b8b8b8" stroke-width="1.5" fill="none"/><path d="M17 17 L22.5 22.5 M22.5 17 L17 22.5" stroke="#b8b8b8" stroke-width="1.6"/></svg>
<div class="t" style="left:355px;top:205px;line-height:16px;font-size:12px;color:#000000;">Find</div>
<div style="left:391px;top:198px;width:400px;height:28px;background:#ffffff;border:1px solid #bdbdbd;border-radius:1px"></div>
<div style="left:797px;top:198px;width:28px;height:28px;background:#efefef;border:1px solid #c3c3c3;border-radius:2px"></div>
<svg style="left:797px;top:198px;" width="28" height="28" viewBox="0 0 28 28"><text x="14" y="20" text-anchor="middle" font-family="Liberation Sans" font-size="15" fill="#3f3f3f">Aa</text></svg>
<div style="left:829px;top:198px;width:28px;height:28px;background:#efefef;border:1px solid #c3c3c3;border-radius:2px"></div>
<svg style="left:829px;top:198px;" width="28" height="28" viewBox="0 0 28 28"><circle cx="9" cy="21" r="1.6" fill="#3f3f3f"/><path d="M17 7.2 V18.8 M12 10.1 L22 15.9 M22 10.1 L12 15.9" stroke="#3f3f3f" stroke-width="2.1"/></svg>
<div style="left:861px;top:198px;width:28px;height:28px;background:#efefef;border:1px solid #c3c3c3;border-radius:2px"></div>
<svg style="left:861px;top:198px;" width="28" height="28" viewBox="0 0 28 28"><path d="M6 14 H21 M14 6.5 L21.5 14 L14 21.5" stroke="#3f3f3f" stroke-width="1.9" fill="none"/></svg>
<div style="left:893px;top:198px;width:28px;height:28px;background:#efefef;border:1px solid #c3c3c3;border-radius:2px"></div>
<svg style="left:893px;top:198px;" width="28" height="28" viewBox="0 0 28 28"><path d="M22 14 H7 M14 6.5 L6.5 14 L14 21.5" stroke="#3f3f3f" stroke-width="1.9" fill="none"/></svg>
<div style="left:925px;top:198px;width:28px;height:28px;background:#efefef;border:1px solid #c3c3c3;border-radius:2px"></div>
<svg style="left:925px;top:198px;" width="28" height="28" viewBox="0 0 28 28"><circle cx="11.5" cy="11.3" r="5.5" stroke="#3f3f3f" stroke-width="1.9" fill="none"/><path d="M15.4 15.3 L21.8 21.7" stroke="#3f3f3f" stroke-width="2.2"/></svg>
<div style="left:348px;top:234px;width:28px;height:28px;background:#f4f4f4;border:1px solid #dadada;border-radius:2px"></div>
<svg style="left:348px;top:234px;" width="28" height="28" viewBox="0 0 28 28"><rect x="8" y="8" width="2" height="11.5" fill="#b0b0b0"/><path d="M20 8.5 L14 13.8 L20 19" stroke="#b0b0b0" stroke-width="1.8" fill="none"/></svg>
<div style="left:380px;top:234px;width:28px;height:28px;background:#f4f4f4;border:1px solid #dadada;border-radius:2px"></div>
<svg style="left:380px;top:234px;" width="28" height="28" viewBox="0 0 28 28"><path d="M17 8.5 L11 13.8 L17 19" stroke="#b0b0b0" stroke-width="1.8" fill="none"/></svg>
<div style="left:412px;top:234px;width:67px;height:28px;background:#ffffff;border:1px solid #ababab;border-radius:2px"></div>
<div class="t" style="left:421px;top:241px;line-height:16px;font-size:12px;color:#000000;">1000</div>
<svg style="left:460px;top:244px;" width="12" height="9" viewBox="0 0 12 9"><path d="M1 1.5 L6 6.5 L11 1.5" stroke="#111" stroke-width="2.2" fill="none"/></svg>
<div style="left:483px;top:234px;width:28px;height:28px;background:#efefef;border:1px solid #c3c3c3;border-radius:2px"></div>
<svg style="left:483px;top:234px;" width="28" height="28" viewBox="0 0 28 28"><path d="M11.5 8.5 L17.5 13.8 L11.5 19" stroke="#3f3f3f" stroke-width="1.8" fill="none"/></svg>
<div style="left:515px;top:234px;width:28px;height:28px;background:#efefef;border:1px solid #c3c3c3;border-radius:2px"></div>
<svg style="left:515px;top:234px;" width="28" height="28" viewBox="0 0 28 28"><path d="M8 8.5 L14 13.8 L8 19" stroke="#3f3f3f" stroke-width="1.8" fill="none"/><rect x="18" y="8" width="2" height="11.5" fill="#3f3f3f"/></svg>
<div style="left:547px;top:234px;width:28px;height:28px;background:#efefef;border:1px solid #c3c3c3;border-radius:2px"></div>
<svg style="left:547px;top:234px;" width="28" height="28" viewBox="0 0 28 28"><path d="M6.2 7.5 Q6.2 6 7.7 6 H20.2 Q21.7 6 21.7 7.5 V20.5 Q21.7 22 20.2 22 H7.7 Q6.2 22 6.2 20.5 Z" stroke="#3f3f3f" stroke-width="1.8" fill="none"/><rect x="5.5" y="5.2" width="17" height="4.8" rx="1.2" fill="#3f3f3f"/><rect x="8.2" y="3.3" width="1.8" height="3" fill="#3f3f3f"/><rect x="18.2" y="3.3" width="1.8" height="3" fill="#3f3f3f"/><rect x="14.1" y="14" width="4.7" height="4.7" fill="#3f3f3f"/></svg>
<div style="left:579px;top:234px;width:28px;height:28px;background:#efefef;border:1px solid #c3c3c3;border-radius:2px"></div>
<svg style="left:579px;top:234px;" width="28" height="28" viewBox="0 0 28 28"><path d="M3.9 22.3 V8 Q8.7 6 13.6 8 V21.8" stroke="#3f3f3f" stroke-width="1.6" fill="none"/><path d="M3.9 22.3 Q8.7 20.3 13.9 22.3 Q19 20.3 24 22.3" stroke="#3f3f3f" stroke-width="1.6" fill="none"/><path d="M24 7.3 V22.5" stroke="#3f3f3f" stroke-width="1.6"/><path d="M16.1 18.7 V8.3 L20.9 3.6 V14.6 Z" fill="#3f3f3f"/></svg>
<div style="left:611px;top:234px;width:28px;height:28px;background:#e57373;border:1px solid #e06e6e;border-radius:1px"></div>
<svg style="left:611px;top:234px;" width="28" height="28" viewBox="0 0 28 28"><rect x="4.1" y="7.2" width="19.7" height="13.5" rx="2.5" fill="#5a1a1a"/><rect x="6.9" y="10.1" width="1.9" height="1.9" fill="#ee9a9a"/><rect x="6.9" y="13.1" width="1.9" height="1.9" fill="#ee9a9a"/><rect x="9.9" y="10.1" width="1.9" height="1.9" fill="#ee9a9a"/><rect x="9.9" y="13.1" width="1.9" height="1.9" fill="#ee9a9a"/><rect x="13.0" y="10.1" width="1.9" height="1.9" fill="#ee9a9a"/><rect x="13.0" y="13.1" width="1.9" height="1.9" fill="#ee9a9a"/><rect x="16.0" y="10.1" width="1.9" height="1.9" fill="#ee9a9a"/><rect x="16.0" y="13.1" width="1.9" height="1.9" fill="#ee9a9a"/><rect x="19.0" y="10.1" width="1.9" height="1.9" fill="#ee9a9a"/><rect x="19.0" y="13.1" width="1.9" height="1.9" fill="#ee9a9a"/><rect x="10" y="17.1" width="8.2" height="1.7" fill="#ee9a9a"/></svg>
<div class="t" style="left:654px;top:241px;line-height:16px;font-size:12px;color:#000000;letter-spacing:-0.2px;">Range: 1 - 1000</div>
<div class="t" style="left:750px;top:241px;line-height:16px;font-size:12px;color:#000000;letter-spacing:-0.2px;">Displaying: 1000</div>
<div class="t" style="left:850px;top:241px;line-height:16px;font-size:12px;color:#000000;letter-spacing:-0.2px;">Total: 17387</div>
<div class="t" style="left:927px;top:241px;line-height:16px;font-size:12px;color:#000000;letter-spacing:-0.2px;">Filtered: 0</div>
<div style="left:342px;top:1089px;width:1228px;height:25px;background:#eeeff1"></div>
<div style="left:348px;top:1109px;width:84px;height:5px;background:#c8c8ca"></div>
<div class="t" style="left:348px;top:1092px;line-height:16px;font-size:12px;color:#555;letter-spacing:-0.1px;">Verbose Output</div>
<div style="left:334px;top:1114px;width:1244px;height:45px;background:#f8f8f8"></div>
<div style="left:348px;top:1119px;width:28px;height:28px;background:#f4f4f4;border:1px solid #dadada;border-radius:2px"></div>
<svg style="left:348px;top:1119px;" width="28" height="28" viewBox="0 0 28 28"><rect x="8" y="8" width="2" height="11.5" fill="#b0b0b0"/><path d="M20 8.5 L14 13.8 L20 19" stroke="#b0b0b0" stroke-width="1.8" fill="none"/></svg>
<div style="left:380px;top:1119px;width:28px;height:28px;background:#f4f4f4;border:1px solid #dadada;border-radius:2px"></div>
<svg style="left:380px;top:1119px;" width="28" height="28" viewBox="0 0 28 28"><path d="M17 8.5 L11 13.8 L17 19" stroke="#b0b0b0" stroke-width="1.8" fill="none"/></svg>
<div style="left:412px;top:1119px;width:61px;height:28px;background:#ffffff;border:1px solid #ababab;border-radius:2px"></div>
<div class="t" style="left:418px;top:1126px;line-height:16px;font-size:12px;color:#000000;">1000</div>
<svg style="left:453px;top:1129px;" width="12" height="9" viewBox="0 0 12 9"><path d="M1 1.5 L6 6.5 L11 1.5" stroke="#111" stroke-width="2.2" fill="none"/></svg>
<div style="left:477px;top:1119px;width:28px;height:28px;background:#efefef;border:1px solid #c3c3c3;border-radius:2px"></div>
<svg style="left:477px;top:1119px;" width="28" height="28" viewBox="0 0 28 28"><path d="M11.5 8.5 L17.5 13.8 L11.5 19" stroke="#3f3f3f" stroke-width="1.8" fill="none"/></svg>
<div style="left:509px;top:1119px;width:28px;height:28px;background:#efefef;border:1px solid #c3c3c3;border-radius:2px"></div>
<svg style="left:509px;top:1119px;" width="28" height="28" viewBox="0 0 28 28"><path d="M8 8.5 L14 13.8 L8 19" stroke="#3f3f3f" stroke-width="1.8" fill="none"/><rect x="18" y="8" width="2" height="11.5" fill="#3f3f3f"/></svg>
<div style="left:342px;top:266px;width:895px;height:823px;background:#ffffff;border:1px solid #a9a9a9"></div>
<div style="left:343px;top:267px;width:893px;height:47px;background:#eeeff1"></div>
<div style="left:343px;top:314px;width:893px;height:1px;background:#a9a9a9"></div>
<div class="t" style="left:359px;top:285px;line-height:16px;font-size:12px;color:#000000;letter-spacing:-0.1px;">Group By:</div>
<div style="left:431px;top:275px;width:77px;height:31px;background:#d32f2f"></div>
<div class="t" style="left:451px;top:284px;line-height:16px;font-size:12px;color:#ffffff;letter-spacing:-0.2px;">Event</div>
<svg style="left:491px;top:287px;" width="9" height="9" viewBox="0 0 9 9"><path d="M0.5 0.5 L8.5 8.5 M8.5 0.5 L0.5 8.5" stroke="#fff" stroke-width="1.4"/></svg>
<div style="left:1158px;top:277px;width:28px;height:28px;background:#efefef;border:1px solid #c3c3c3;border-radius:2px"></div>
<svg style="left:1158px;top:277px;" width="28" height="28" viewBox="0 0 28 28"><path d="M8.5 13.5 L14 8.5 L19.5 13.5 M8.5 19 L14 14 L19.5 19" stroke="#3f3f3f" stroke-width="1.8" fill="none"/></svg>
<div style="left:1190px;top:277px;width:28px;height:28px;background:#efefef;border:1px solid #c3c3c3;border-radius:2px"></div>
<svg style="left:1190px;top:277px;" width="28" height="28" viewBox="0 0 28 28"><path d="M8.5 9 L14 14 L19.5 9 M8.5 14.5 L14 19.5 L19.5 14.5" stroke="#3f3f3f" stroke-width="1.8" fill="none"/></svg>
<div style="left:343px;top:315px;width:875px;height:26px;background:#f4f4f4"></div>
<div style="left:343px;top:341px;width:875px;height:2px;background:#dedede"></div>
<div style="left:377px;top:315px;width:2px;height:26px;background:#dedede"></div>
<div style="left:466px;top:315px;width:2px;height:26px;background:#dedede"></div>
<div style="left:633px;top:315px;width:2px;height:26px;background:#dedede"></div>
<div style="left:884px;top:315px;width:2px;height:26px;background:#dedede"></div>
<div style="left:942px;top:315px;width:2px;height:26px;background:#dedede"></div>
<div style="left:1159px;top:315px;width:2px;height:26px;background:#dedede"></div>
<div style="left:1218px;top:315px;width:1px;height:27px;background:#dedede"></div>
<svg style="left:350px;top:322px;" width="15" height="15" viewBox="0 0 15 15"><circle cx="7.5" cy="7.5" r="6.3" stroke="#333" stroke-width="1.3" fill="none"/><rect x="6.8" y="6.3" width="1.4" height="4.8" fill="#333"/><circle cx="7.5" cy="4.4" r="0.85" fill="#333"/></svg>
<div class="t" style="left:385px;top:322px;line-height:16px;font-size:12px;color:#000000;letter-spacing:-0.1px;">Level</div>
<div class="t" style="left:474px;top:322px;line-height:16px;font-size:12px;color:#000000;letter-spacing:-0.1px;">Time</div>
<div class="t" style="left:642px;top:322px;line-height:16px;font-size:12px;color:#000000;letter-spacing:-0.1px;">Host</div>
<div class="t" style="left:892px;top:322px;line-height:16px;font-size:12px;color:#000000;letter-spacing:-0.1px;">Log</div>
<div class="t" style="left:950px;top:322px;line-height:16px;font-size:12px;color:#000000;letter-spacing:-0.1px;">Source</div>
<div class="t" style="left:1167px;top:322px;line-height:16px;font-size:12px;color:#000000;letter-spacing:-0.1px;">Event</div>
<svg style="left:1202px;top:325px;" width="9" height="7" viewBox="0 0 9 7"><path d="M4.5 0 L9 6.5 H0 Z" fill="#111"/></svg>
<div style="left:1218px;top:343px;width:18px;height:728px;background:#f9f9f9"></div>
<svg style="left:1222px;top:349px;" width="11" height="6" viewBox="0 0 11 6"><path d="M0.5 5.5 L5.5 0.7 L10.5 5.5" stroke="#555" stroke-width="1.1" fill="none"/></svg>
<div style="left:1225px;top:360px;width:5px;height:616px;background:#c6c7ca;border-radius:3px"></div>
<svg style="left:1222px;top:1059px;" width="11" height="6" viewBox="0 0 11 6"><path d="M0.5 0.5 L5.5 5.3 L10.5 0.5" stroke="#555" stroke-width="1.1" fill="none"/></svg>
<div style="left:343px;top:1071px;width:876px;height:17px;background:#f7f7f7"></div>
<svg style="left:349px;top:1075px;" width="6" height="10" viewBox="0 0 6 10"><path d="M5.5 0.5 L1 5 L5.5 9.5" stroke="#555" stroke-width="1.1" fill="none"/></svg>
<div style="left:360px;top:1077px;width:660px;height:5px;background:#c6c7ca;border-radius:3px"></div>
<svg style="left:1207px;top:1075px;" width="6" height="10" viewBox="0 0 6 10"><path d="M0.5 0.5 L5 5 L0.5 9.5" stroke="#555" stroke-width="1.1" fill="none"/></svg>
<div style="left:343px;top:343px;width:875px;height:728px;overflow:hidden">
<div style="left:-343px;top:-343px;width:1586px;height:1193px">
<svg style="left:345px;top:347px;" width="20" height="20" viewBox="0 0 20 20"><circle cx="9.4" cy="10.2" r="8.8" stroke="#a8a8a8" stroke-width="1.1" fill="#fff"/><path transform="translate(9.4 10.6)" d="M-3.5 -1.7 L0 1.8 L3.5 -1.7" stroke="#4a4a4a" stroke-width="1.6" fill="none"/></svg>
<div class="t" style="left:372px;top:350px;line-height:16px;font-size:12px;color:#111;font-weight:bold;letter-spacing:-0.1px;">4624</div>
<div class="t" style="left:424px;top:350px;line-height:16px;font-size:12px;color:#111;font-weight:bold;letter-spacing:-0.1px;">169</div>
<svg style="left:345px;top:375px;" width="20" height="20" viewBox="0 0 20 20"><circle cx="9.4" cy="10.2" r="8.8" stroke="#a8a8a8" stroke-width="1.1" fill="#fff"/><path transform="translate(9.4 10.6)" d="M-3.5 1.8 L0 -1.7 L3.5 1.8" stroke="#4a4a4a" stroke-width="1.6" fill="none"/></svg>
<div class="t" style="left:372px;top:378px;line-height:16px;font-size:12px;color:#111;font-weight:bold;letter-spacing:-0.1px;">4625</div>
<div class="t" style="left:424px;top:378px;line-height:16px;font-size:12px;color:#111;font-weight:bold;letter-spacing:-0.1px;">1</div>
<div style="left:344px;top:398px;width:875px;height:48px;background:#d32f2f"></div>
<svg style="left:355px;top:400px;" width="15" height="19" viewBox="0 0 15 19"><path d="M4 8 V5.2 A3.5 3.5 0 0 1 11 5.2 V8" stroke="#f6b7b8" stroke-width="2.2" fill="none"/><rect x="0.3" y="7.3" width="14" height="10.7" rx="1.5" fill="#f6b7b8"/><circle cx="7.3" cy="11.8" r="1.4" fill="#d32f2f"/></svg>
<div class="t" style="left:388px;top:403px;line-height:16px;font-size:12px;color:#ffffff;letter-spacing:-0.15px;">Failure Audit</div>
<div class="t" style="left:477px;top:403px;line-height:16px;font-size:12px;color:#ffffff;letter-spacing:-0.1px;">10/25/2022 10:54:50.187 AM</div>
<div class="t" style="left:645px;top:403px;line-height:16px;font-size:12px;color:#ffffff;letter-spacing:-0.06px;">server2016dc-2.cornerbowlsoftwaredev.com</div>
<div class="t" style="left:895px;top:403px;line-height:16px;font-size:12px;color:#ffffff;letter-spacing:-0.1px;">Security</div>
<div class="t" style="left:953px;top:403px;line-height:16px;font-size:12px;color:#ffffff;letter-spacing:0.15px;">Microsoft-Windows-Security-Auditing</div>
<div class="t" style="left:1150px;width:60px;text-align:right;top:403px;line-height:16px;color:#ffffff;letter-spacing:-0.1px">4625</div>
<div class="t" style="left:376px;top:423px;line-height:16px;font-size:12px;color:#ffffff;letter-spacing:-0.1px;">An account failed to log on.</div>
<svg style="left:345px;top:451px;" width="20" height="20" viewBox="0 0 20 20"><circle cx="9.4" cy="10.2" r="8.8" stroke="#a8a8a8" stroke-width="1.1" fill="#fff"/><path transform="translate(9.4 10.6)" d="M-3.5 -1.7 L0 1.8 L3.5 -1.7" stroke="#4a4a4a" stroke-width="1.6" fill="none"/></svg>
<div class="t" style="left:372px;top:454px;line-height:16px;font-size:12px;color:#111;font-weight:bold;letter-spacing:-0.1px;">4627</div>
<div class="t" style="left:424px;top:454px;line-height:16px;font-size:12px;color:#111;font-weight:bold;letter-spacing:-0.1px;">169</div>
<svg style="left:345px;top:479px;" width="20" height="20" viewBox="0 0 20 20"><circle cx="9.4" cy="10.2" r="8.8" stroke="#a8a8a8" stroke-width="1.1" fill="#fff"/><path transform="translate(9.4 10.6)" d="M-3.5 -1.7 L0 1.8 L3.5 -1.7" stroke="#4a4a4a" stroke-width="1.6" fill="none"/></svg>
<div class="t" style="left:372px;top:482px;line-height:16px;font-size:12px;color:#111;font-weight:bold;letter-spacing:-0.1px;">4634</div>
<div class="t" style="left:424px;top:482px;line-height:16px;font-size:12px;color:#111;font-weight:bold;letter-spacing:-0.1px;">166</div>
<svg style="left:345px;top:507px;" width="20" height="20" viewBox="0 0 20 20"><circle cx="9.4" cy="10.2" r="8.8" stroke="#a8a8a8" stroke-width="1.1" fill="#fff"/><path transform="translate(9.4 10.6)" d="M-3.5 -1.7 L0 1.8 L3.5 -1.7" stroke="#4a4a4a" stroke-width="1.6" fill="none"/></svg>
<div class="t" style="left:372px;top:510px;line-height:16px;font-size:12px;color:#111;font-weight:bold;letter-spacing:-0.1px;">4648</div>
<div class="t" style="left:424px;top:510px;line-height:16px;font-size:12px;color:#111;font-weight:bold;letter-spacing:-0.1px;">2</div>
<svg style="left:345px;top:535px;" width="20" height="20" viewBox="0 0 20 20"><circle cx="9.4" cy="10.2" r="8.8" stroke="#a8a8a8" stroke-width="1.1" fill="#fff"/><path transform="translate(9.4 10.6)" d="M-3.5 -1.7 L0 1.8 L3.5 -1.7" stroke="#4a4a4a" stroke-width="1.6" fill="none"/></svg>
<div class="t" style="left:372px;top:538px;line-height:16px;font-size:12px;color:#111;font-weight:bold;letter-spacing:-0.1px;">4670</div>
<div class="t" style="left:424px;top:538px;line-height:16px;font-size:12px;color:#111;font-weight:bold;letter-spacing:-0.1px;">54</div>
<svg style="left:345px;top:563px;" width="20" height="20" viewBox="0 0 20 20"><circle cx="9.4" cy="10.2" r="8.8" stroke="#a8a8a8" stroke-width="1.1" fill="#fff"/><path transform="translate(9.4 10.6)" d="M-3.5 -1.7 L0 1.8 L3.5 -1.7" stroke="#4a4a4a" stroke-width="1.6" fill="none"/></svg>
<div class="t" style="left:372px;top:566px;line-height:16px;font-size:12px;color:#111;font-weight:bold;letter-spacing:-0.1px;">4688</div>
<div class="t" style="left:424px;top:566px;line-height:16px;font-size:12px;color:#111;font-weight:bold;letter-spacing:-0.1px;">76</div>
<svg style="left:345px;top:591px;" width="20" height="20" viewBox="0 0 20 20"><circle cx="9.4" cy="10.2" r="8.8" stroke="#a8a8a8" stroke-width="1.1" fill="#fff"/><path transform="translate(9.4 10.6)" d="M-3.5 -1.7 L0 1.8 L3.5 -1.7" stroke="#4a4a4a" stroke-width="1.6" fill="none"/></svg>
<div class="t" style="left:372px;top:594px;line-height:16px;font-size:12px;color:#111;font-weight:bold;letter-spacing:-0.1px;">4689</div>
<div class="t" style="left:424px;top:594px;line-height:16px;font-size:12px;color:#111;font-weight:bold;letter-spacing:-0.1px;">61</div>
<svg style="left:345px;top:619px;" width="20" height="20" viewBox="0 0 20 20"><circle cx="9.4" cy="10.2" r="8.8" stroke="#a8a8a8" stroke-width="1.1" fill="#fff"/><path transform="translate(9.4 10.6)" d="M-3.5 -1.7 L0 1.8 L3.5 -1.7" stroke="#4a4a4a" stroke-width="1.6" fill="none"/></svg>
<div class="t" style="left:372px;top:622px;line-height:16px;font-size:12px;color:#111;font-weight:bold;letter-spacing:-0.1px;">4720</div>
<div class="t" style="left:424px;top:622px;line-height:16px;font-size:12px;color:#111;font-weight:bold;letter-spacing:-0.1px;">5</div>
<svg style="left:345px;top:647px;" width="20" height="20" viewBox="0 0 20 20"><circle cx="9.4" cy="10.2" r="8.8" stroke="#a8a8a8" stroke-width="1.1" fill="#fff"/><path transform="translate(9.4 10.6)" d="M-3.5 1.8 L0 -1.7 L3.5 1.8" stroke="#4a4a4a" stroke-width="1.6" fill="none"/></svg>
<div class="t" style="left:372px;top:650px;line-height:16px;font-size:12px;color:#111;font-weight:bold;letter-spacing:-0.1px;">4722</div>
<div class="t" style="left:424px;top:650px;line-height:16px;font-size:12px;color:#111;font-weight:bold;letter-spacing:-0.1px;">5</div>
<svg style="left:352px;top:676px;" width="20" height="12" viewBox="0 0 20 12"><circle cx="5.8" cy="5.9" r="3.6" stroke="#388e3c" stroke-width="2.8" fill="none"/><rect x="9.4" y="3.8" width="9.5" height="4.2" fill="#388e3c"/><rect x="14" y="7" width="2.8" height="3.7" fill="#388e3c"/><rect x="17.2" y="7" width="1.7" height="1.8" fill="#388e3c"/></svg>
<div class="t" style="left:388px;top:675px;line-height:16px;font-size:12px;color:#000000;letter-spacing:-0.15px;">Success Audit</div>
<div class="t" style="left:477px;top:675px;line-height:16px;font-size:12px;color:#000000;letter-spacing:-0.1px;">10/25/2022 10:58:55.470 AM</div>
<div class="t" style="left:645px;top:675px;line-height:16px;font-size:12px;color:#000000;letter-spacing:-0.06px;">server2016dc-2.cornerbowlsoftwaredev.com</div>
<div class="t" style="left:895px;top:675px;line-height:16px;font-size:12px;color:#000000;letter-spacing:-0.1px;">Security</div>
<div class="t" style="left:953px;top:675px;line-height:16px;font-size:12px;color:#000000;letter-spacing:0.15px;">Microsoft-Windows-Security-Auditing</div>
<div class="t" style="left:1150px;width:60px;text-align:right;top:675px;line-height:16px;color:#000000;letter-spacing:-0.1px">4722</div>
<div class="t" style="left:376px;top:695px;line-height:16px;font-size:12px;color:#000000;letter-spacing:-0.1px;">A user account was enabled.</div>
<svg style="left:352px;top:724px;" width="20" height="12" viewBox="0 0 20 12"><circle cx="5.8" cy="5.9" r="3.6" stroke="#388e3c" stroke-width="2.8" fill="none"/><rect x="9.4" y="3.8" width="9.5" height="4.2" fill="#388e3c"/><rect x="14" y="7" width="2.8" height="3.7" fill="#388e3c"/><rect x="17.2" y="7" width="1.7" height="1.8" fill="#388e3c"/></svg>
<div class="t" style="left:388px;top:723px;line-height:16px;font-size:12px;color:#000000;letter-spacing:-0.15px;">Success Audit</div>
<div class="t" style="left:477px;top:723px;line-height:16px;font-size:12px;color:#000000;letter-spacing:-0.1px;">10/25/2022 11:06:35.347 AM</div>
<div class="t" style="left:645px;top:723px;line-height:16px;font-size:12px;color:#000000;letter-spacing:-0.06px;">server2016dc-2.cornerbowlsoftwaredev.com</div>
<div class="t" style="left:895px;top:723px;line-height:16px;font-size:12px;color:#000000;letter-spacing:-0.1px;">Security</div>
<div class="t" style="left:953px;top:723px;line-height:16px;font-size:12px;color:#000000;letter-spacing:0.15px;">Microsoft-Windows-Security-Auditing</div>
<div class="t" style="left:1150px;width:60px;text-align:right;top:723px;line-height:16px;color:#000000;letter-spacing:-0.1px">4722</div>
<div class="t" style="left:376px;top:743px;line-height:16px;font-size:12px;color:#000000;letter-spacing:-0.1px;">A user account was enabled.</div>
<svg style="left:352px;top:772px;" width="20" height="12" viewBox="0 0 20 12"><circle cx="5.8" cy="5.9" r="3.6" stroke="#388e3c" stroke-width="2.8" fill="none"/><rect x="9.4" y="3.8" width="9.5" height="4.2" fill="#388e3c"/><rect x="14" y="7" width="2.8" height="3.7" fill="#388e3c"/><rect x="17.2" y="7" width="1.7" height="1.8" fill="#388e3c"/></svg>
<div class="t" style="left:388px;top:771px;line-height:16px;font-size:12px;color:#000000;letter-spacing:-0.15px;">Success Audit</div>
<div class="t" style="left:477px;top:771px;line-height:16px;font-size:12px;color:#000000;letter-spacing:-0.1px;">10/25/2022 11:03:25.103 AM</div>
<div class="t" style="left:645px;top:771px;line-height:16px;font-size:12px;color:#000000;letter-spacing:-0.06px;">server2016dc-2.cornerbowlsoftwaredev.com</div>
<div class="t" style="left:895px;top:771px;line-height:16px;font-size:12px;color:#000000;letter-spacing:-0.1px;">Security</div>
<div class="t" style="left:953px;top:771px;line-height:16px;font-size:12px;color:#000000;letter-spacing:0.15px;">Microsoft-Windows-Security-Auditing</div>
<div class="t" style="left:1150px;width:60px;text-align:right;top:771px;line-height:16px;color:#000000;letter-spacing:-0.1px">4722</div>
<div class="t" style="left:376px;top:791px;line-height:16px;font-size:12px;color:#000000;letter-spacing:-0.1px;">A user account was enabled.</div>
<svg style="left:352px;top:820px;" width="20" height="12" viewBox="0 0 20 12"><circle cx="5.8" cy="5.9" r="3.6" stroke="#388e3c" stroke-width="2.8" fill="none"/><rect x="9.4" y="3.8" width="9.5" height="4.2" fill="#388e3c"/><rect x="14" y="7" width="2.8" height="3.7" fill="#388e3c"/><rect x="17.2" y="7" width="1.7" height="1.8" fill="#388e3c"/></svg>
<div class="t" style="left:388px;top:819px;line-height:16px;font-size:12px;color:#000000;letter-spacing:-0.15px;">Success Audit</div>
<div class="t" style="left:477px;top:819px;line-height:16px;font-size:12px;color:#000000;letter-spacing:-0.1px;">10/25/2022 11:01:10.287 AM</div>
<div class="t" style="left:645px;top:819px;line-height:16px;font-size:12px;color:#000000;letter-spacing:-0.06px;">server2016dc-2.cornerbowlsoftwaredev.com</div>
<div class="t" style="left:895px;top:819px;line-height:16px;font-size:12px;color:#000000;letter-spacing:-0.1px;">Security</div>
<div class="t" style="left:953px;top:819px;line-height:16px;font-size:12px;color:#000000;letter-spacing:0.15px;">Microsoft-Windows-Security-Auditing</div>
<div class="t" style="left:1150px;width:60px;text-align:right;top:819px;line-height:16px;color:#000000;letter-spacing:-0.1px">4722</div>
<div class="t" style="left:376px;top:839px;line-height:16px;font-size:12px;color:#000000;letter-spacing:-0.1px;">A user account was enabled.</div>
<svg style="left:352px;top:868px;" width="20" height="12" viewBox="0 0 20 12"><circle cx="5.8" cy="5.9" r="3.6" stroke="#388e3c" stroke-width="2.8" fill="none"/><rect x="9.4" y="3.8" width="9.5" height="4.2" fill="#388e3c"/><rect x="14" y="7" width="2.8" height="3.7" fill="#388e3c"/><rect x="17.2" y="7" width="1.7" height="1.8" fill="#388e3c"/></svg>
<div class="t" style="left:388px;top:867px;line-height:16px;font-size:12px;color:#000000;letter-spacing:-0.15px;">Success Audit</div>
<div class="t" style="left:477px;top:867px;line-height:16px;font-size:12px;color:#000000;letter-spacing:-0.1px;">10/25/2022 11:05:30.297 AM</div>
<div class="t" style="left:645px;top:867px;line-height:16px;font-size:12px;color:#000000;letter-spacing:-0.06px;">server2016dc-2.cornerbowlsoftwaredev.com</div>
<div class="t" style="left:895px;top:867px;line-height:16px;font-size:12px;color:#000000;letter-spacing:-0.1px;">Security</div>
<div class="t" style="left:953px;top:867px;line-height:16px;font-size:12px;color:#000000;letter-spacing:0.15px;">Microsoft-Windows-Security-Auditing</div>
<div class="t" style="left:1150px;width:60px;text-align:right;top:867px;line-height:16px;color:#000000;letter-spacing:-0.1px">4722</div>
<div class="t" style="left:376px;top:887px;line-height:16px;font-size:12px;color:#000000;letter-spacing:-0.1px;">A user account was enabled.</div>
<svg style="left:345px;top:915px;" width="20" height="20" viewBox="0 0 20 20"><circle cx="9.4" cy="10.2" r="8.8" stroke="#a8a8a8" stroke-width="1.1" fill="#fff"/><path transform="translate(9.4 10.6)" d="M-3.5 -1.7 L0 1.8 L3.5 -1.7" stroke="#4a4a4a" stroke-width="1.6" fill="none"/></svg>
<div class="t" style="left:372px;top:918px;line-height:16px;font-size:12px;color:#111;font-weight:bold;letter-spacing:-0.1px;">4724</div>
<div class="t" style="left:424px;top:918px;line-height:16px;font-size:12px;color:#111;font-weight:bold;letter-spacing:-0.1px;">5</div>
<svg style="left:345px;top:943px;" width="20" height="20" viewBox="0 0 20 20"><circle cx="9.4" cy="10.2" r="8.8" stroke="#a8a8a8" stroke-width="1.1" fill="#fff"/><path transform="translate(9.4 10.6)" d="M-3.5 -1.7 L0 1.8 L3.5 -1.7" stroke="#4a4a4a" stroke-width="1.6" fill="none"/></svg>
<div class="t" style="left:372px;top:946px;line-height:16px;font-size:12px;color:#111;font-weight:bold;letter-spacing:-0.1px;">4738</div>
<div class="t" style="left:424px;top:946px;line-height:16px;font-size:12px;color:#111;font-weight:bold;letter-spacing:-0.1px;">16</div>
<svg style="left:345px;top:971px;" width="20" height="20" viewBox="0 0 20 20"><circle cx="9.4" cy="10.2" r="8.8" stroke="#a8a8a8" stroke-width="1.1" fill="#fff"/><path transform="translate(9.4 10.6)" d="M-3.5 -1.7 L0 1.8 L3.5 -1.7" stroke="#4a4a4a" stroke-width="1.6" fill="none"/></svg>
<div class="t" style="left:372px;top:974px;line-height:16px;font-size:12px;color:#111;font-weight:bold;letter-spacing:-0.1px;">4768</div>
<div class="t" style="left:424px;top:974px;line-height:16px;font-size:12px;color:#111;font-weight:bold;letter-spacing:-0.1px;">1</div>
<svg style="left:345px;top:999px;" width="20" height="20" viewBox="0 0 20 20"><circle cx="9.4" cy="10.2" r="8.8" stroke="#a8a8a8" stroke-width="1.1" fill="#fff"/><path transform="translate(9.4 10.6)" d="M-3.5 -1.7 L0 1.8 L3.5 -1.7" stroke="#4a4a4a" stroke-width="1.6" fill="none"/></svg>
<div class="t" style="left:372px;top:1002px;line-height:16px;font-size:12px;color:#111;font-weight:bold;letter-spacing:-0.1px;">4769</div>
<div class="t" style="left:424px;top:1002px;line-height:16px;font-size:12px;color:#111;font-weight:bold;letter-spacing:-0.1px;">6</div>
<svg style="left:345px;top:1027px;" width="20" height="20" viewBox="0 0 20 20"><circle cx="9.4" cy="10.2" r="8.8" stroke="#a8a8a8" stroke-width="1.1" fill="#fff"/><path transform="translate(9.4 10.6)" d="M-3.5 -1.7 L0 1.8 L3.5 -1.7" stroke="#4a4a4a" stroke-width="1.6" fill="none"/></svg>
<div class="t" style="left:372px;top:1030px;line-height:16px;font-size:12px;color:#111;font-weight:bold;letter-spacing:-0.1px;">4776</div>
<div class="t" style="left:424px;top:1030px;line-height:16px;font-size:12px;color:#111;font-weight:bold;letter-spacing:-0.1px;">27</div>
<svg style="left:345px;top:1055px;" width="20" height="20" viewBox="0 0 20 20"><circle cx="9.4" cy="10.2" r="8.8" stroke="#a8a8a8" stroke-width="1.1" fill="#fff"/><path transform="translate(9.4 10.6)" d="M-3.5 -1.7 L0 1.8 L3.5 -1.7" stroke="#4a4a4a" stroke-width="1.6" fill="none"/></svg>
<div class="t" style="left:372px;top:1058px;line-height:16px;font-size:12px;color:#111;font-weight:bold;letter-spacing:-0.1px;">4799</div>
<div class="t" style="left:424px;top:1058px;line-height:16px;font-size:12px;color:#111;font-weight:bold;letter-spacing:-0.1px;">2</div>
</div></div>
<div style="left:1244px;top:266px;width:326px;height:823px;background:#f9f9f9;border:1px solid #cfd0d2"></div>
<div style="left:1245px;top:267px;width:324px;height:23px;background:#eeeff1"></div>
<div class="t" style="left:1250px;top:271px;line-height:16px;font-size:12px;color:#000000;letter-spacing:-0.1px;">Message</div>
<svg style="left:1306px;top:276px;" width="201" height="5" viewBox="0 0 201 5"><defs><pattern id="gp1306" width="4" height="4" patternUnits="userSpaceOnUse"><rect x="0" y="0" width="1" height="1" fill="#8c8c8c"/><rect x="2" y="2" width="1" height="1" fill="#8c8c8c"/></pattern></defs><rect width="201" height="5" fill="url(#gp1306)"/></svg>
<svg style="left:1516px;top:276px;" width="9" height="6" viewBox="0 0 9 6"><path d="M0.5 0.5 L4.5 4.5 L8.5 0.5" stroke="#444" stroke-width="1.1" fill="none"/></svg>
<svg style="left:1534px;top:271px;" width="9" height="11" viewBox="0 0 9 11"><path d="M2 0.5 H7 M2.5 0.5 V6 M6.5 0.5 V6 M0.5 6.5 H8.5 M4.5 6.5 V10.5" stroke="#444" stroke-width="1.2" fill="none"/><rect x="5" y="1" width="2" height="5" fill="#444"/></svg>
<svg style="left:1552px;top:272px;" width="11" height="11" viewBox="0 0 11 11"><path d="M0.5 0.5 L10.5 10.5 M10.5 0.5 L0.5 10.5" stroke="#444" stroke-width="1.2"/></svg>
<div style="left:1245px;top:290px;width:324px;height:798px;background:#ffffff;border:1px solid #d6d6d6"></div>
<div class="t" style="left:1251px;top:295px;line-height:16px;font-size:12px;color:#000000;letter-spacing:-0.1px;">An account failed to log on.</div>
<div class="t" style="left:1251px;top:327px;line-height:16px;font-size:12px;color:#000000;letter-spacing:-0.1px;">Subject:</div>
<div class="t" style="left:1299px;top:343px;line-height:16px;font-size:12px;color:#000000;letter-spacing:-0.1px;">Security ID:</div>
<div class="t" style="left:1443px;top:343px;line-height:16px;font-size:12px;color:#000000;letter-spacing:-0.1px;">S-1-0-0</div>
<div class="t" style="left:1299px;top:359px;line-height:16px;font-size:12px;color:#000000;letter-spacing:-0.1px;">Account Name:</div>
<div class="t" style="left:1443px;top:359px;line-height:16px;font-size:12px;color:#000000;letter-spacing:-0.1px;">-</div>
<div class="t" style="left:1299px;top:375px;line-height:16px;font-size:12px;color:#000000;letter-spacing:-0.1px;">Account Domain:</div>
<div class="t" style="left:1443px;top:375px;line-height:16px;font-size:12px;color:#000000;letter-spacing:-0.1px;">-</div>
<div class="t" style="left:1299px;top:391px;line-height:16px;font-size:12px;color:#000000;letter-spacing:-0.1px;">Logon ID:</div>
<div class="t" style="left:1443px;top:391px;line-height:16px;font-size:12px;color:#000000;letter-spacing:-0.1px;">0x0</div>
<div class="t" style="left:1251px;top:423px;line-height:16px;font-size:12px;color:#000000;letter-spacing:-0.1px;">Logon Type:</div>
<div class="t" style="left:1443px;top:423px;line-height:16px;font-size:12px;color:#000000;letter-spacing:-0.1px;">3</div>
<div class="t" style="left:1251px;top:455px;line-height:16px;font-size:12px;color:#000000;letter-spacing:-0.1px;">Account For Which Logon Failed:</div>
<div class="t" style="left:1299px;top:471px;line-height:16px;font-size:12px;color:#000000;letter-spacing:-0.1px;">Security ID:</div>
<div class="t" style="left:1443px;top:471px;line-height:16px;font-size:12px;color:#000000;letter-spacing:-0.1px;">S-1-0-0</div>
<div class="t" style="left:1299px;top:487px;line-height:16px;font-size:12px;color:#000000;letter-spacing:-0.1px;">Account Name:</div>
<div class="t" style="left:1443px;top:487px;line-height:16px;font-size:12px;color:#000000;letter-spacing:-0.1px;">mjanulaitis</div>
<div class="t" style="left:1299px;top:503px;line-height:16px;font-size:12px;color:#000000;letter-spacing:-0.1px;">Account Domain:</div>
<div class="t" style="left:1443px;top:503px;line-height:16px;font-size:12px;color:#000000;letter-spacing:-0.1px;">MicrosoftAccount</div>
<div class="t" style="left:1251px;top:535px;line-height:16px;font-size:12px;color:#000000;letter-spacing:-0.1px;">Failure Information:</div>
<div class="t" style="left:1299px;top:551px;line-height:16px;font-size:12px;color:#000000;letter-spacing:-0.1px;">Failure Reason:</div>
<div class="t" style="left:1443px;top:551px;line-height:16px;font-size:12px;color:#000000;letter-spacing:-0.1px;">Unknown user name</div>
<div class="t" style="left:1251px;top:567px;line-height:16px;font-size:12px;color:#000000;letter-spacing:-0.1px;">or bad password.</div>
<div class="t" style="left:1299px;top:583px;line-height:16px;font-size:12px;color:#000000;letter-spacing:-0.1px;">Status:</div>
<div class="t" style="left:1443px;top:583px;line-height:16px;font-size:12px;color:#000000;letter-spacing:-0.1px;">0xC000006D</div>
<div class="t" style="left:1299px;top:599px;line-height:16px;font-size:12px;color:#000000;letter-spacing:-0.1px;">Sub Status:</div>
<div class="t" style="left:1443px;top:599px;line-height:16px;font-size:12px;color:#000000;letter-spacing:-0.1px;">0xC000006A</div>
<div class="t" style="left:1251px;top:631px;line-height:16px;font-size:12px;color:#000000;letter-spacing:-0.1px;">Process Information:</div>
<div class="t" style="left:1299px;top:647px;line-height:16px;font-size:12px;color:#000000;letter-spacing:-0.3px;">Caller Process ID:</div>
<div class="t" style="left:1395px;top:647px;line-height:16px;font-size:12px;color:#000000;letter-spacing:-0.1px;">0x0</div>
<div class="t" style="left:1299px;top:663px;line-height:16px;font-size:12px;color:#000000;letter-spacing:-0.1px;">Caller Process Name:</div>
<div class="t" style="left:1443px;top:663px;line-height:16px;font-size:12px;color:#000000;letter-spacing:-0.1px;">-</div>
<div class="t" style="left:1251px;top:695px;line-height:16px;font-size:12px;color:#000000;letter-spacing:-0.1px;">Network Information:</div>
<div class="t" style="left:1299px;top:710px;line-height:16px;font-size:12px;color:#000000;letter-spacing:-0.1px;">Workstation Name:</div>
<div class="t" style="left:1443px;top:710px;line-height:16px;font-size:12px;color:#000000;letter-spacing:-0.1px;">HOYT</div>
<div class="t" style="left:1299px;top:726px;line-height:16px;font-size:12px;color:#000000;letter-spacing:-0.1px;">Source Network Address:</div>
<div class="t" style="left:1443px;top:726px;line-height:16px;font-size:12px;color:#000000;letter-spacing:-0.1px;">107.191.0.192</div>
<div class="t" style="left:1299px;top:742px;line-height:16px;font-size:12px;color:#000000;letter-spacing:-0.1px;">Source Port:</div>
<div class="t" style="left:1443px;top:742px;line-height:16px;font-size:12px;color:#000000;letter-spacing:-0.1px;">0</div>
<div class="t" style="left:1251px;top:774px;line-height:16px;font-size:12px;color:#000000;letter-spacing:-0.1px;">Detailed Authentication Information:</div>
<div class="t" style="left:1299px;top:790px;line-height:16px;font-size:12px;color:#000000;letter-spacing:-0.1px;">Logon Process:</div>
<div class="t" style="left:1443px;top:790px;line-height:16px;font-size:12px;color:#000000;letter-spacing:-0.1px;">NtLmSsp</div>
<div class="t" style="left:1299px;top:806px;line-height:16px;font-size:12px;color:#000000;letter-spacing:-0.1px;">Authentication Package:</div>
<div class="t" style="left:1443px;top:806px;line-height:16px;font-size:12px;color:#000000;letter-spacing:-0.1px;">NTLM</div>
<div class="t" style="left:1299px;top:822px;line-height:16px;font-size:12px;color:#000000;letter-spacing:-0.1px;">Transited Services:</div>
<div class="t" style="left:1443px;top:822px;line-height:16px;font-size:12px;color:#000000;letter-spacing:-0.1px;">-</div>
<div class="t" style="left:1299px;top:838px;line-height:16px;font-size:12px;color:#000000;letter-spacing:-0.1px;">Package Name (NTLM only):</div>
<div class="t" style="left:1491px;top:838px;line-height:16px;font-size:12px;color:#000000;letter-spacing:-0.1px;">-</div>
<div class="t" style="left:1299px;top:854px;line-height:16px;font-size:12px;color:#000000;letter-spacing:-0.1px;">Key Length:</div>
<div class="t" style="left:1443px;top:854px;line-height:16px;font-size:12px;color:#000000;letter-spacing:-0.1px;">0</div>
</body></html>
